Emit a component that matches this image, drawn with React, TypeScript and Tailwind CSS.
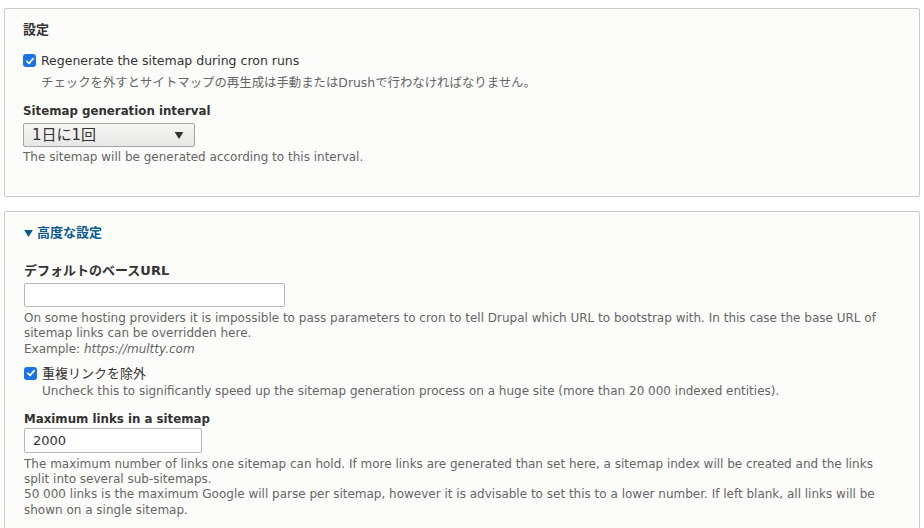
import { FC } from "react";

const font = { fontFamily: '"DejaVu Sans", "Noto Sans CJK JP", sans-serif' };

const Check: FC = () => (
  <span className="mt-[1px] inline-flex h-[13px] w-[13px] flex-shrink-0 items-center justify-center rounded-[3px] bg-[#1a73e8]">
    <svg viewBox="0 0 12 12" className="h-[10px] w-[10px]">
      <path d="M2.2 6.3 L4.8 8.8 L9.8 3.2" fill="none" stroke="#fff" strokeWidth="2" strokeLinecap="round" strokeLinejoin="round" />
    </svg>
  </span>
);

export default function App() {
  return (
    <div className="h-[528px] w-[924px] overflow-hidden bg-white pt-[8px] text-[12.5px] text-[#333]" style={font}>
      {/* 設定 */}
      <fieldset className="mx-[4px] h-[189px] rounded-[2px] border border-[#cccccc] bg-[#fcfcfa] px-[18px] pt-[12px]">
        <div className="text-[13px] font-bold leading-[18px] text-[#333]">設定</div>

        <div className="mt-[14px] flex items-start gap-[5px]">
          <Check />
          <div>
            <div className="leading-[15px]">Regenerate the sitemap during cron runs</div>
            <div className="mt-[7px] text-[12.4px] leading-[15px] text-[#666]">
              チェックを外すとサイトマップの再生成は手動またはDrushで行わなければなりません。
            </div>
          </div>
        </div>

        <div className="mt-[12px] text-[11.8px] font-bold leading-[18px]">Sitemap generation interval</div>
        <div className="mt-[3px] flex h-[24px] w-[172px] items-center justify-between rounded-[2px] border border-[#a6a6a6] bg-gradient-to-b from-[#f6f6f3] to-[#e7e7e7] pl-[8px] pr-[10px] text-[15px]">
          <span>1日に1回</span>
          <svg viewBox="0 0 10 8" className="h-[7px] w-[10px]">
            <path d="M0 0 H10 L5 8 Z" fill="#333" />
          </svg>
        </div>
        <div className="mt-[3px] text-[12px] leading-[15px] text-[#666]">
          The sitemap will be generated according to this interval.
        </div>
      </fieldset>

      {/* 高度な設定 */}
      <fieldset className="mx-[4px] mt-[14px] h-[330px] rounded-[2px] border border-[#cccccc] bg-[#fcfcfa] px-[19px] pt-[12px]">
        <div className="flex items-center gap-[4px] text-[13px] font-bold leading-[18px] text-[#0b5a8e]">
          <svg viewBox="0 0 10 8" className="h-[7px] w-[9px]">
            <path d="M0 0 H10 L5 8 Z" fill="#0b5a8e" />
          </svg>
          <span>高度な設定</span>
        </div>

        <div className="mt-[20px] text-[13px] font-bold leading-[18px]">デフォルトのベースURL</div>
        <div className="mt-[3px] h-[24px] w-[261px] rounded-[2px] border border-[#b8b8b8] bg-white" />
        <div className="mt-[4px] text-[12px] leading-[15.3px] text-[#666]">
          On some hosting providers it is impossible to pass parameters to cron to tell Drupal which URL to bootstrap with. In this case the base URL of sitemap links can be overridden here.
          <br />
          Example: <em>https://multty.com</em>
        </div>

        <div className="mt-[9px] flex items-start gap-[5px]">
          <Check />
          <div>
            <div className="text-[13px] leading-[15px]">重複リンクを除外</div>
            <div className="mt-[3px] text-[12px] leading-[15px] text-[#666]">
              Uncheck this to significantly speed up the sitemap generation process on a huge site (more than 20 000 indexed entities).
            </div>
          </div>
        </div>

        <div className="mt-[11px] text-[11.8px] font-bold leading-[18px]">Maximum links in a sitemap</div>
        <div className="flex h-[25px] w-[178px] items-center rounded-[2px] border border-[#b8b8b8] bg-white pl-[8px] text-[13px]">
          2000
        </div>
        <div className="mt-[4px] text-[12px] leading-[15.3px] text-[#666]">
          The maximum number of links one sitemap can hold. If more links are generated than set here, a sitemap index will be created and the links split into several sub-sitemaps.
          <br />
          50 000 links is the maximum Google will parse per sitemap, however it is advisable to set this to a lower number. If left blank, all links will be shown on a single sitemap.
        </div>
      </fieldset>
    </div>
  );
}
